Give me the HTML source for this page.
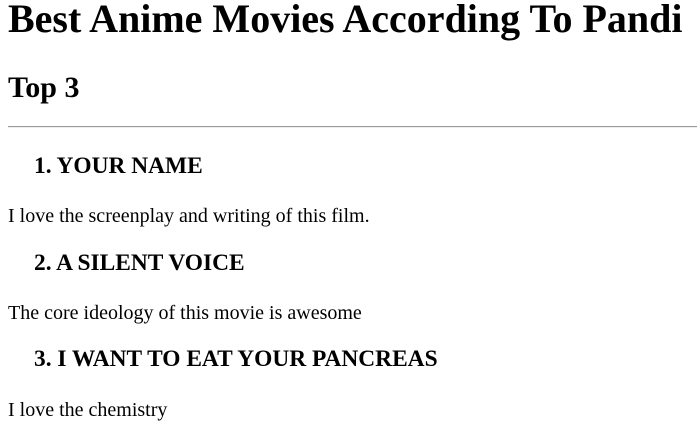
<!DOCTYPE html>
<html><head><meta charset="utf-8"><style>
html,body{margin:0;padding:0;background:#fff;width:697px;height:448px;overflow:hidden}
body{font-family:"Liberation Serif",serif;color:#000;position:relative}
.t{position:absolute;left:8px;line-height:1;white-space:nowrap;margin:0}
h1.t{font-size:40px;font-weight:bold;top:-1px}
h2.t{font-size:30px;font-weight:bold;top:73px}
h3.t{font-size:23.4px;font-weight:bold;left:34px}
p.t{font-size:20px}
hr{position:absolute;left:8px;width:689px;top:126px;margin:0;border:0;border-top:1px solid #9a9a9a;border-bottom:1px solid #eee;height:0}
</style></head><body>
<h1 class="t">Best Anime Movies According To Pandi</h1>
<h2 class="t">Top 3</h2>
<hr>
<h3 class="t" style="top:155px">1. YOUR NAME</h3>
<p class="t" style="top:206px">I love the screenplay and writing of this film.</p>
<h3 class="t" style="top:251.5px">2. A SILENT VOICE</h3>
<p class="t" style="top:303px">The core ideology of this movie is awesome</p>
<h3 class="t" style="top:348px">3. I WANT TO EAT YOUR PANCREAS</h3>
<p class="t" style="top:400px">I love the chemistry</p>
</body></html>
